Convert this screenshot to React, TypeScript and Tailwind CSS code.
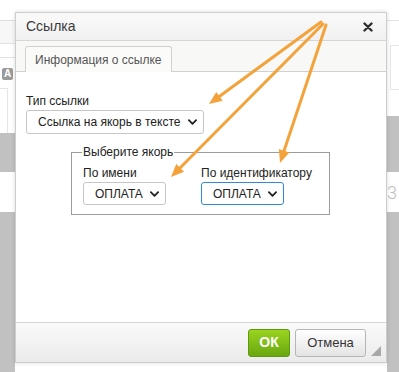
import type { ReactNode } from 'react'

const sans = { fontFamily: '"Liberation Sans", Arial, sans-serif' }

function Chevron({ className = '' }: { className?: string }) {
  return (
    <svg viewBox="0 0 10 6" className={`w-[9px] h-[6px] shrink-0 ${className}`}>
      <path d="M1 1l4 4 4-4" fill="none" stroke="#222" strokeWidth="2" strokeLinecap="round" strokeLinejoin="round" />
    </svg>
  )
}

function FakeSelect({ value, width, focused }: { value: string; width: string; focused?: boolean }) {
  return (
    <div
      className={`flex items-center justify-between rounded-[3px] bg-white pl-[11px] pr-[6px] text-[12px] text-[#222] whitespace-nowrap ${width} ${
        focused ? 'border border-[#2d8ae0]' : 'border border-[#c6c6c6]'
      }`}
    >
      <span>{value}</span>
      <Chevron />
    </div>
  )
}

function Arrow({ x1, y1, x2, y2 }: { x1: number; y1: number; x2: number; y2: number }) {
  const dx = x2 - x1
  const dy = y2 - y1
  const len = Math.hypot(dx, dy)
  const ux = dx / len
  const uy = dy / len
  const head = 13
  const half = 5.5
  const bx = x2 - ux * head
  const by = y2 - uy * head
  const pts = `${x2},${y2} ${bx - uy * half},${by + ux * half} ${bx + uy * half},${by - ux * half}`
  return (
    <g>
      <line x1={x1} y1={y1} x2={bx + ux * 2} y2={by + uy * 2} stroke="#f4a23a" strokeWidth="3" strokeLinecap="round" />
      <polygon points={pts} fill="#f4a23a" />
    </g>
  )
}

function Strip({ children }: { children: ReactNode }) {
  return <div className="flex flex-col h-full">{children}</div>
}

export default function App() {
  return (
    <div className="relative w-[399px] h-[372px] overflow-hidden bg-white" style={sans}>
      {/* editor behind the dialog */}
      <div className="flex h-full justify-between">
        <Strip>
          <div className="w-[15px] h-[20px] bg-white" />
          <div className="h-[23px] bg-[#f7f7f7] border-t border-[#dcdcdc]" />
          <div className="h-[15px] bg-white border-t border-[#e2e2e2] border-b" />
          <div className="h-[30px] pl-[2px] pt-[10px] bg-white">
            <div className="w-[11px] h-[12px] rounded-[2px] bg-[#9a9a9a] text-white text-[10px] font-bold leading-[12px] text-center">A</div>
          </div>
          <div className="h-[45px] bg-white border-r border-t border-[#e4e4e4] w-[8px]" />
          <div className="h-[39px] bg-[#c1c1c1]" />
          <div className="h-[40px] bg-white" />
          <div className="flex-1 bg-[#c1c1c1]" />
        </Strip>
        <Strip>
          <div className="w-[12px] h-[20px] bg-white" />
          <div className="h-[25px] bg-white border-t border-[#e4e4e4]" />
          <div className="h-[45px] ml-[3px] bg-white border-l border-t border-b border-[#e6e6e6]" />
          <div className="h-[26px] bg-white" />
          <div className="h-[56px] bg-[#c1c1c1]" />
          <div className="h-[40px] bg-white flex items-center text-[18px] text-[#bdbdbd] font-light" style={{ fontFamily: 'Roboto, sans-serif' }}>
            3
          </div>
          <div className="flex-1 bg-[#c1c1c1]" />
        </Strip>
      </div>

      {/* dialog */}
      <div className="absolute left-[15px] top-[12px] w-[372px] h-[351px] flex flex-col border border-[#cdcdcd] bg-white shadow-[0_0_4px_rgba(0,0,0,0.15)]">
        <div className="h-[28px] shrink-0 flex items-center justify-between pl-[10px] pr-[13px] bg-gradient-to-b from-[#fafafa] to-[#f1f1f1] border-b border-[#d6d6d6]">
          <span className="text-[14px] text-[#3a3a3a]">Ссылка</span>
          <svg viewBox="0 0 10 10" className="w-[10px] h-[10px]">
            <path d="M1.5 1.5l7 7M8.5 1.5l-7 7" stroke="#2f2f2f" strokeWidth="2.4" strokeLinecap="round" />
          </svg>
        </div>

        <div className="h-[31px] shrink-0 flex items-end pl-[9px] bg-[#f8f8f7] border-b border-[#d1d1d1]">
          <div className="h-[26px] -mb-px px-[9px] flex items-center rounded-t-[3px] border border-b-0 border-[#d1d1d1] bg-[#fbfbfa] text-[12px] text-[#555]">
            Информация о ссылке
          </div>
        </div>

        <div className="flex-1 pl-[10px] pt-[22px]">
          <div className="text-[12px] text-[#222] leading-[14px]">Тип ссылки</div>
          <div className="mt-[2px]">
            <FakeSelect value="Ссылка на якорь в тексте" width="w-[178px] h-[24px]" />
          </div>

          <fieldset className="ml-[45px] mt-[11px] w-[259px] h-[70px] border border-[#9c9c9c] pl-[11px] pr-[2px] pt-[7px]">
            <legend className="ml-[-1px] px-[1px] text-[12px] text-[#222] leading-[14px]">Выберите якорь</legend>
            <div className="flex gap-[35px]">
              <div>
                <div className="text-[12px] text-[#222] leading-[14px]">По имени</div>
                <div className="mt-[2px]">
                  <FakeSelect value="ОПЛАТА" width="w-[83px] h-[23px]" />
                </div>
              </div>
              <div>
                <div className="text-[12px] text-[#222] leading-[14px]">По идентификатору</div>
                <div className="mt-[2px]">
                  <FakeSelect value="ОПЛАТА" width="w-[83px] h-[23px]" focused />
                </div>
              </div>
            </div>
          </fieldset>
        </div>

        <div className="relative h-[40px] shrink-0 flex items-center justify-end gap-[5px] pr-[20px] border-t border-[#d3d3d3] bg-gradient-to-b from-[#fafafa] to-[#ebebeb]">
          <button className="w-[42px] h-[28px] rounded-[3px] border border-[#5d9a12] bg-gradient-to-b from-[#9bd41f] to-[#68a70f] text-white text-[14px] font-bold">
            ОК
          </button>
          <button className="w-[71px] h-[28px] rounded-[3px] border border-[#b6b6b6] bg-gradient-to-b from-[#ffffff] to-[#e4e4e4] text-[#333] text-[13px]">
            Отмена
          </button>
          <svg viewBox="0 0 10 10" className="absolute right-[5px] bottom-[6px] w-[10px] h-[10px]">
            <polygon points="10,0 10,10 0,10" fill="#a8a8a8" />
          </svg>
        </div>
      </div>

      {/* callout arrows */}
      <svg className="absolute inset-0 pointer-events-none" width="399" height="372">
        <Arrow x1={321} y1={22} x2={209} y2={104} />
        <Arrow x1={323} y1={24} x2={171} y2={177} />
        <Arrow x1={326} y1={25} x2={280} y2={163} />
      </svg>
    </div>
  )
}
